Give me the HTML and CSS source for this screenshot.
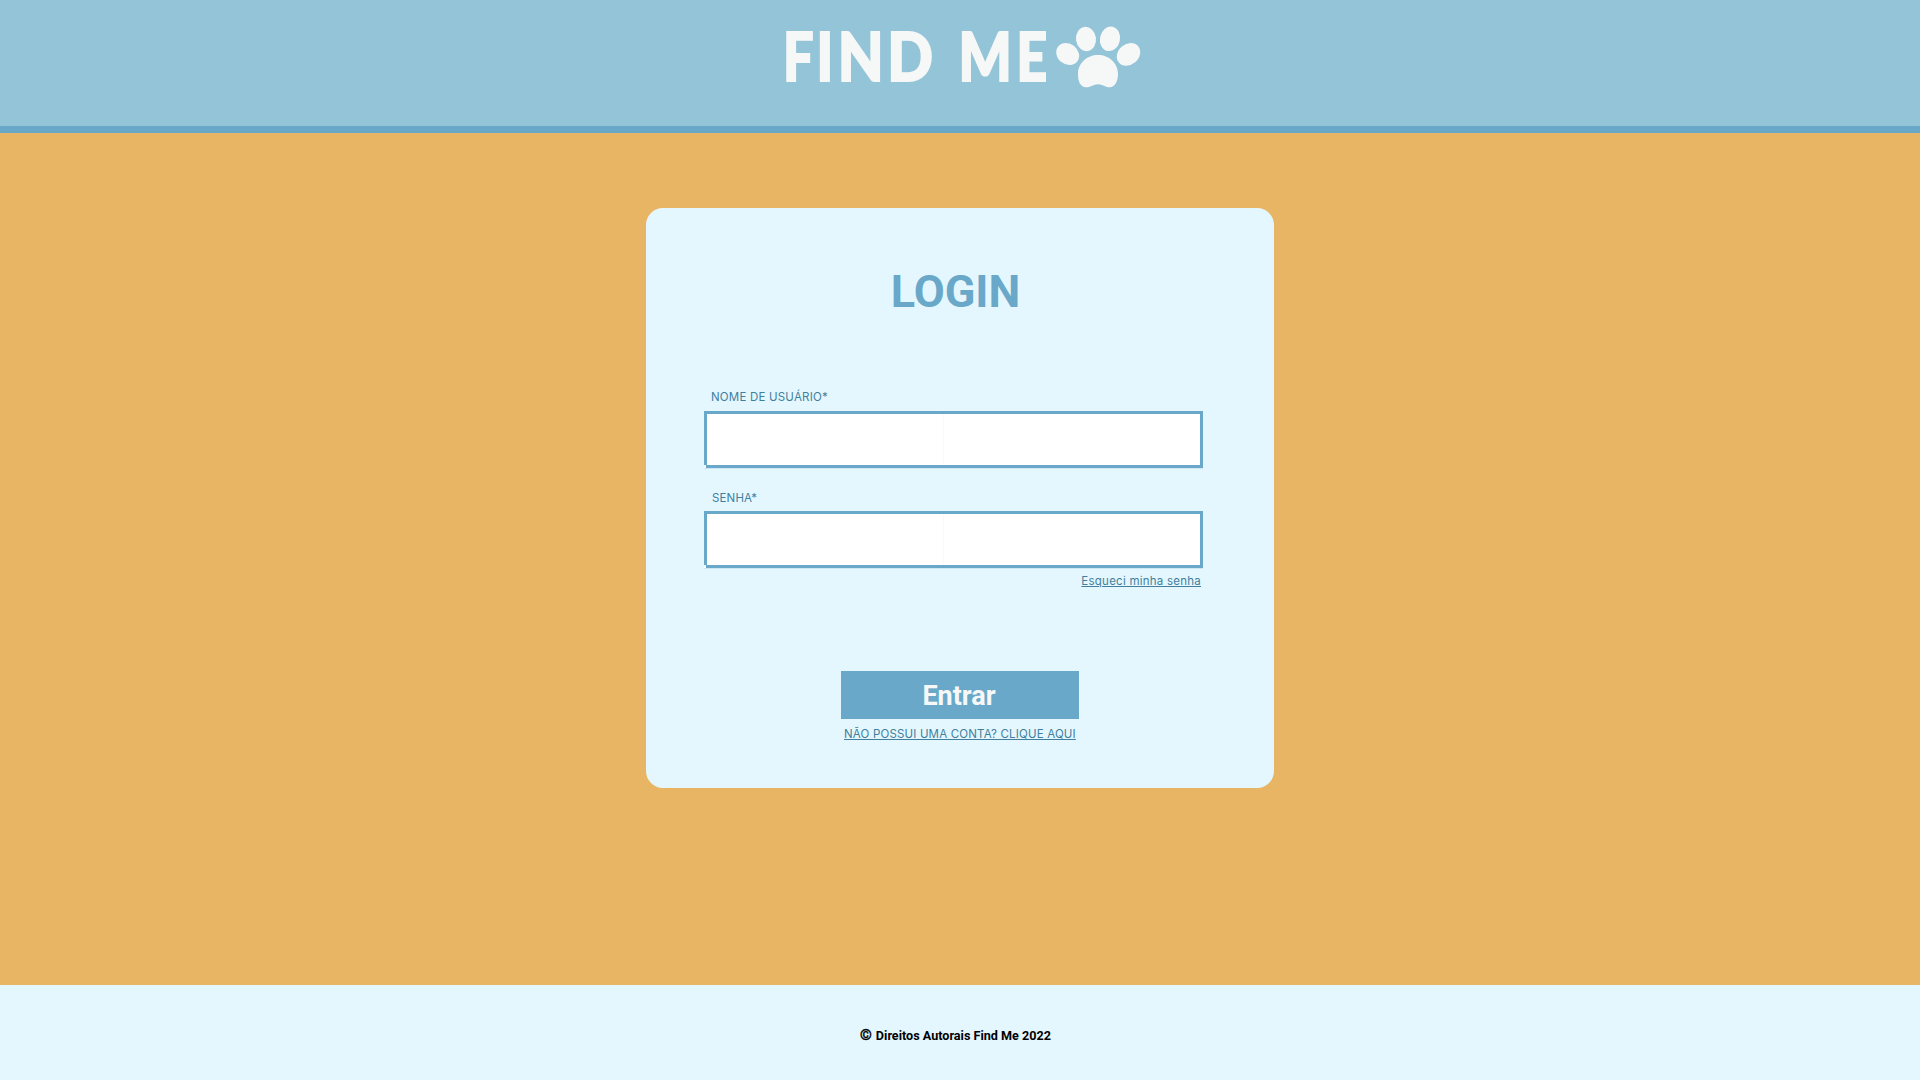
FILE: index.html
```html
<!DOCTYPE html>
<html lang="pt-BR">
<head>
<meta charset="utf-8">
<title>Find Me - Login</title>
<link rel="stylesheet" href="styles.css">
</head>
<body>
<header class="header">
  <svg class="logo" viewBox="0 0 390 90" role="img" aria-label="Find Me">
    <g class="logo-text">
      <text transform="translate(12.9 71) scale(.8 1)">F</text>
      <text transform="translate(46.4 71) scale(.82 1)">I</text>
      <text transform="translate(67.8 71) scale(.88 1)">N</text>
      <text transform="translate(117.2 71) scale(.89 1)">D</text>
      <text transform="translate(188.4 71) scale(.83 1)">M</text>
      <text transform="translate(246.5 71) scale(.79 1)">E</text>
    </g>
    <g class="paw">
      <ellipse cx="297.7" cy="44" rx="12.1" ry="10.3" transform="rotate(38 297.7 44)"/>
      <ellipse cx="316" cy="29" rx="10" ry="12.2" transform="rotate(-8 316 29)"/>
      <ellipse cx="340" cy="28.8" rx="10" ry="12.4" transform="rotate(12 340 28.8)"/>
      <ellipse cx="358.5" cy="44.4" rx="12.6" ry="10.3" transform="rotate(-40 358.5 44.4)"/>
      <path d="M328 45C317 45 308 53 308 64C308 71 310 77 316 77.3C321 77.5 323 74.3 328 74.3C333 74.3 335 77.5 340 77.3C345 77 348 71 348 64C348 53 339 45 328 45Z"/>
    </g>
  </svg>
</header>
<main class="main">
  <form class="card">
    <h1 class="title">LOGIN</h1>
    <label class="label label-user" for="user">NOME DE USUÁRIO*</label>
    <div class="field"><input class="input" id="user" type="text"></div>
    <label class="label label-pass" for="pass">SENHA*</label>
    <div class="field"><input class="input" id="pass" type="password"></div>
    <a class="link forgot" href="#">Esqueci minha senha</a>
    <button class="submit" type="button">Entrar</button>
    <a class="link signup" href="#">NÃO POSSUI UMA CONTA? CLIQUE AQUI</a>
  </form>
</main>
<footer class="footer"><span class="copy">©</span><span>Direitos Autorais Find Me 2022</span></footer>
</body>
</html>
```
FILE: styles.css
```css
* { box-sizing: border-box; }
body {
  margin: 0;
  height: 1080px;
  display: flex;
  flex-direction: column;
  overflow: hidden;
  background: #e8b565;
  font-family: Roboto, sans-serif;
}
.header {
  height: 133px;
  flex: none;
  display: flex;
  justify-content: center;
  padding: 10px 0 0 10px;
  background: #94c4d8;
  border-bottom: 7px solid #69a8c8;
}
.logo { width: 390px; height: 90px; fill: #f6f8f8; }
.logo-text { font: 900 67.5px Lato, sans-serif; stroke: #f6f8f8; stroke-width: 2px; }
.main {
  flex: 1;
  display: flex;
  justify-content: center;
  align-items: flex-start;
  padding-top: 75px;
}
.card {
  width: 628px;
  height: 580px;
  padding: 57px 71px 0 58px;
  display: flex;
  flex-direction: column;
  border-radius: 17px;
  background: #e4f7ff;
}
.title {
  margin: 0 0 0 4px;
  height: 54px;
  line-height: 54px;
  font-size: 45px;
  font-weight: 700;
  text-align: center;
  color: #69a8c8;
}
.label, .link {
  font-family: Inter, sans-serif;
  font-size: 11.5px;
  font-weight: 400;
  line-height: 16px;
  color: #427f9c;
  white-space: nowrap;
}
.label-user { margin: 70px 0 6px 7px; letter-spacing: .2px; }
.label-pass { margin: 22px 0 5px 8px; letter-spacing: .15px; }
.field {
  height: 57px;
  position: relative;
  background: linear-gradient(90deg, transparent 236px, #f1fcfc 236px, #f1fcfc 237px, transparent 237px) #fff;
  border: 3px solid #69a8c8;
  box-shadow: 0 .5px 0 #69a8c866;
}
/* notched lower-left corner */
.field::after {
  content: "";
  position: absolute;
  left: -3px;
  bottom: -3px;
  width: 2px;
  height: 3px;
  background: #f2fbff;
}
.input {
  display: block;
  width: 100%;
  height: 100%;
  padding: 0 12px;
  border: 0;
  outline: 0;
  background: none;
}
.link { text-decoration: underline; text-underline-offset: 1px; }
.forgot { align-self: flex-end; margin: 5px 2px 0 0; letter-spacing: .24px; }
.submit {
  width: 238px;
  height: 48px;
  margin: 82px 0 0 137px;
  padding: 1px 2px 0 0;
  border: 0;
  background: #69a8c8;
  color: #f6f8f8;
  font: 700 27px/48px Roboto, sans-serif;
}
.signup { align-self: flex-start; margin: 7px 0 0 140px; letter-spacing: .17px; }
.footer {
  height: 95px;
  flex: none;
  padding: 5px 9px 0 0;
  display: flex;
  align-items: center;
  justify-content: center;
  gap: 4px;
  background: #e4f7ff;
  color: #000;
  font-size: 12.6px;
  font-weight: 700;
}
.copy { font-size: 15px; line-height: 15px; -webkit-text-stroke: .4px #000; }
```
